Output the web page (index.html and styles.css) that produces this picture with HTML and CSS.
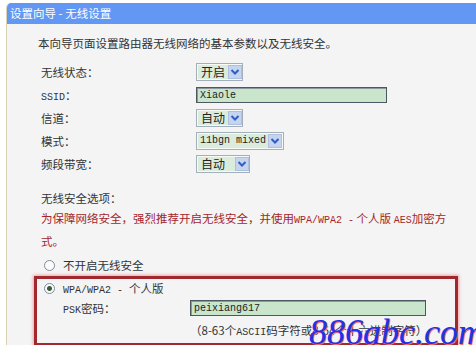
FILE: index.html
```html
<!DOCTYPE html>
<html lang="zh-CN">
<head>
    <meta charset="UTF-8">
    <title>设置向导 - 无线设置</title>
    <link rel="stylesheet" href="styles.css">
</head>
<body>
    <div class="panel">
        <div class="title">设置向导 - 无线设置</div>
        <p class="intro">本向导页面设置路由器无线网络的基本参数以及无线安全。</p>

        <div class="form">
            <label>无线状态：</label>
            <div><span class="select w47"><span class="val">开启</span><span class="arrow"><svg width="10" height="8" viewBox="0 0 10 8"><path d="M1.5 2 L5 5.5 L8.5 2" fill="none" stroke="#2e5fc2" stroke-width="2"/></svg></span></span></div>

            <label><span class="en">SSID</span>：</label>
            <div><input type="text" class="text ssid" value="Xiaole"></div>

            <label>信道：</label>
            <div><span class="select w47"><span class="val">自动</span><span class="arrow"><svg width="10" height="8" viewBox="0 0 10 8"><path d="M1.5 2 L5 5.5 L8.5 2" fill="none" stroke="#2e5fc2" stroke-width="2"/></svg></span></span></div>

            <label>模式：</label>
            <div><span class="select w87"><span class="val en">11bgn mixed</span><span class="arrow"><svg width="10" height="8" viewBox="0 0 10 8"><path d="M1.5 2 L5 5.5 L8.5 2" fill="none" stroke="#2e5fc2" stroke-width="2"/></svg></span></span></div>

            <label>频段带宽：</label>
            <div><span class="select w54"><span class="val">自动</span><span class="arrow"><svg width="10" height="8" viewBox="0 0 10 8"><path d="M1.5 2 L5 5.5 L8.5 2" fill="none" stroke="#2e5fc2" stroke-width="2"/></svg></span></span></div>
        </div>

        <div class="security">
            <p>无线安全选项：</p>
            <p class="warn">为保障网络安全，强烈推荐开启无线安全，并使用<span class="en">WPA/WPA2 -</span> 个人版 <span class="en">AES</span>加密方式。</p>
        </div>

        <div class="option"><input type="radio" name="sec"><span>不开启无线安全</span></div>

        <div class="chosen">
            <div class="option in"><input type="radio" name="sec" checked><span><span class="en">WPA/WPA2 - </span>个人版</span></div>
            <div class="psk">
                <label><span class="en">PSK</span>密码：</label>
                <input type="text" class="text pass" value="peixiang617">
            </div>
            <div class="hint">（8-63个<span class="en">ASCII</span>码字符或8-64个十六进制字符）</div>
        </div>

        <div class="option"><input type="radio" name="sec"><span>不修改无线安全设置</span></div>

        <div class="mark">886abc.com</div>
    </div>
</body>
</html>
```
FILE: styles.css
```css
body {
    margin: 0;
    background-color: #fff;
    font-family: "Noto Sans CJK SC", sans-serif;
    font-size: 11.5px;
    color: #333;
}

.panel {
    position: relative;
    margin: 3px 0 0 6px;
    height: 342px;
    background-color: #f4f4f4;
    border-left: 1px solid #d9d2b2;
    border-top-left-radius: 5px;
    overflow: hidden;
}

.title {
    height: 21px;
    line-height: 21px;
    padding-left: 3px;
    background-color: #6297f4;
    color: #fff;
}

.en {
    font-family: "Liberation Mono", monospace;
    font-size: 10px;
}

.intro {
    margin: 10px 0 0 31px;
    line-height: 18px;
}

.form {
    display: grid;
    grid-template-columns: 155px auto;
    grid-auto-rows: 18px;
    row-gap: 5px;
    margin: 11px 0 0 34px;
    align-items: center;
}

.form > div {
    display: flex;
    align-items: center;
}

.select {
    display: inline-flex;
    flex-shrink: 0;
    align-items: center;
    justify-content: space-between;
    box-sizing: border-box;
    height: 18px;
    padding: 1px;
    border: 1px solid #a3afbb;
    background-color: #f7f9f7;
    white-space: nowrap;
}

.select .val {
    height: 14px;
    line-height: 14px;
    padding: 0 3px;
    background-color: #dcecdc;
    color: #222;
    font-size: 12px;
}

.select .val.en {
    padding: 0 2px;
    font-size: 10px;
}

.select .arrow {
    display: flex;
    flex-shrink: 0;
    align-items: center;
    justify-content: center;
    box-sizing: border-box;
    width: 14px;
    height: 14px;
    background-color: #c6d4ef;
    border: 1px solid #aebfe0;
}

.w47 { width: 47px; }
.w54 { width: 54px; }
.w87 { width: 88px; }

.w54 .val { padding-right: 10px; }

.text {
    box-sizing: border-box;
    height: 16px;
    margin: 0;
    padding: 0 3px;
    border: 1px solid #4d5862;
    box-shadow: inset 1px 1px 0 #8d979f;
    background-color: #c9e6cd;
    font-family: "Liberation Mono", monospace;
    font-size: 10px;
    color: #222;
}

.ssid { width: 191px; }
.pass { width: 236px; }

.security {
    margin: 15px 0 0 34px;
}

.security p {
    margin: 0;
    line-height: 20px;
}

.warn {
    width: 410px;
    color: #a3262b;
}

.option {
    display: flex;
    align-items: center;
    margin: 4px 0 0 37px;
    height: 20px;
    white-space: pre;
}

.option input {
    appearance: none;
    width: 11px;
    height: 11px;
    margin: 0 8px 0 0;
    border: 1px solid #7d8c9c;
    border-radius: 50%;
    background-color: #fbfbfb;
}

.option input:checked {
    background: radial-gradient(circle, #3a5a3a 0, #3a5a3a 2px, #fbfbfb 3px);
}

.chosen {
    margin: 1px 0 0 27px;
    width: 404px;
    padding: 0 7px 1px 7px;
    border: 3px solid #a1282e;
    box-shadow: 0 0 3px 1px #f3a3a3;
}

.chosen .option.in {
    margin: 0;
    height: 18px;
}

.psk {
    display: flex;
    align-items: center;
    margin-top: 2px;
    padding-left: 19px;
    height: 18px;
}

.psk label {
    width: 127px;
}

.hint {
    margin: 4px 0 0 146px;
    line-height: 18px;
    white-space: nowrap;
}

.mark {
    position: absolute;
    left: 302px;
    top: 308px;
    font-family: "Liberation Serif", serif;
    font-style: italic;
    font-size: 36px;
    color: #2132e8;
    text-shadow: 1px 1px 0 #f26a6a;
}
```
